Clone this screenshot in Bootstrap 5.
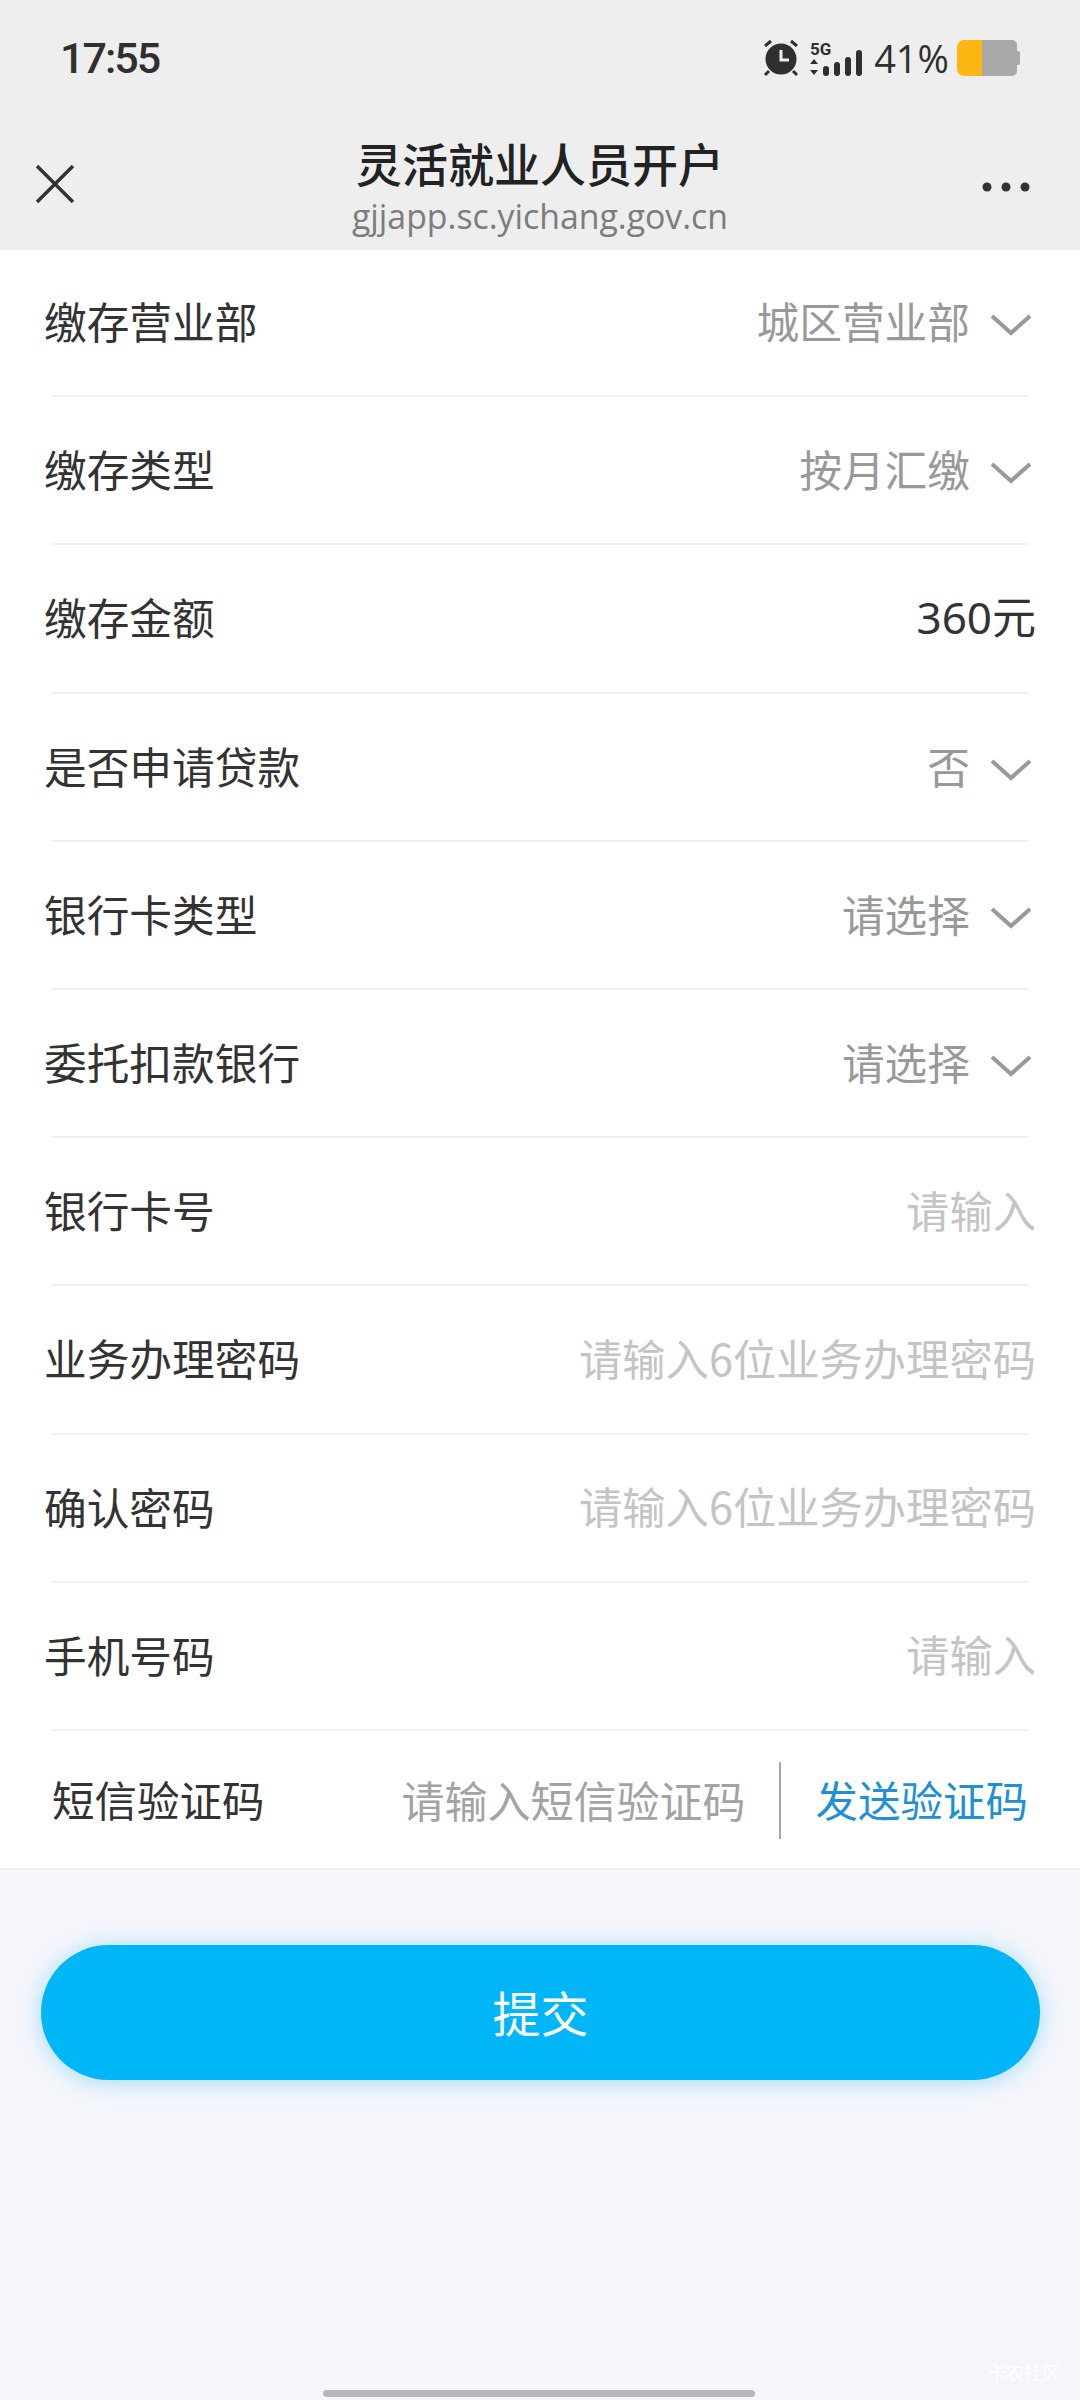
<!DOCTYPE html>
<html lang="zh-CN">
<head>
    <meta charset="UTF-8">
    <title>灵活就业人员开户</title>
    <link href="https://cdn.jsdelivr.net/npm/bootstrap@5.3.0/dist/css/bootstrap.min.css" rel="stylesheet">
    <style>
        body {
            background: #f4f6fb;
            font-family: "Noto Sans CJK SC", "Noto Sans", sans-serif;
            width: 1080px;
            height: 2400px;
            overflow: hidden;
            position: relative;
        }

        .top-area { background: #eeeeee; height: 250px; }

        .status-row { height: 116px; padding: 0 60px 0 60px; color: #2f2f2f; }
        .status-time { font-family: Roboto, sans-serif; font-size: 43px; font-weight: 500; letter-spacing: -2px; }
        .status-pct { font-family: "Open Sans", sans-serif; font-size: 38px; margin: 0 8px 0 10px; line-height: 1; }

        .nav-row { height: 134px; padding: 0 50px 0 35px; }
        .nav-side-l { flex: 0 0 165px; }
        .nav-side-r { flex: 0 0 150px; }
        .nav-title { font-size: 46px; line-height: 60px; color: #222; font-weight: 500; }
        .nav-url { font-family: "Open Sans", sans-serif; font-size: 33.8px; line-height: 38px; margin-top: 5px; color: #7c7c7c; }
        .nav-close { margin-top: 2px; }
        .nav-dots { margin-top: 3px; }

        .form-area { background: #fff; height: 1620px; border-bottom: 2px solid #eeeff2; }

        .form-line { height: 148.2px; padding: 0 44px 8px 44px; font-size: 42.7px; color: #333; position: relative; }
        .form-line::after {
            content: "";
            position: absolute;
            left: 52px;
            right: 52px;
            bottom: 1px;
            height: 2px;
            background: #f0f0f0;
        }
        .val-select { color: #999; }
        .val-input { color: #c4c4c4; font-size: 43.3px; }
        .val-plain { color: #333; font-size: 44px; padding-top: 2px; font-family: "Noto Sans", "Noto Sans CJK SC", sans-serif; }
        .chev { margin: 10px 4px 0 20px; }

        .code-line { height: 138px; padding: 0 52px 4px; font-size: 42.5px; color: #333; }
        .code-input { color: #a3a3a3; font-size: 43px; margin-right: 34px; }
        .code-sep { width: 2px; height: 77px; background: #a6a6a6; margin: 4px 34px 0 0; }
        .code-send { color: #1f8fd6; }

        .submit-btn {
            display: block;
            width: 999px;
            height: 135px;
            margin: 75px 0 0 41px;
            padding: 0 0 4px;
            background: #00b6f7;
            border: none;
            border-radius: 68px;
            color: #fff;
            font-size: 48px;
            box-shadow: 0 2px 22px rgba(0, 170, 240, 0.35);
        }
        .submit-btn:hover { background: #00b6f7; color: #fff; }

        .home-bar { position: absolute; left: 323px; top: 2390px; width: 432px; height: 7px; background: #b6b7bb; border-radius: 4px; }
        .water-mark { position: absolute; left: 988px; top: 2359px; font-size: 18px; color: #ffffff; }
    </style>
</head>
<body>

<div class="top-area">
    <div class="status-row d-flex align-items-center justify-content-between">
        <span class="status-time">17:55</span>
        <div class="d-flex align-items-center">
            <svg width="38" height="38" viewBox="0 0 38 38" class="me-2">
                <circle cx="19" cy="20" r="15.5" fill="#2f2f2f"/>
                <path d="M19 11v10h8" fill="none" stroke="#eee" stroke-width="3"/>
                <path d="M3 7l6-5M35 7l-6-5M7 32l-4 4M31 32l4 4" stroke="#2f2f2f" stroke-width="3" fill="none"/>
            </svg>
            <svg width="56" height="38" viewBox="0 0 56 38">
                <text x="2" y="16" font-family="Roboto, sans-serif" font-size="17" font-weight="700" fill="#2f2f2f">5G</text>
                <path d="M6 20l4 5H2zM6 36l4-5H2z" fill="#2f2f2f"/>
                <rect x="15" y="27" width="6" height="10" rx="3" fill="#2f2f2f"/>
                <rect x="26" y="23" width="6" height="14" rx="3" fill="#2f2f2f"/>
                <rect x="37" y="18" width="6" height="19" rx="3" fill="#2f2f2f"/>
                <rect x="48" y="11" width="6" height="26" rx="3" fill="#2f2f2f"/>
            </svg>
            <span class="status-pct">41%</span>
            <svg width="63" height="36" viewBox="0 0 63 36">
                <path d="M25 0h30a5 5 0 0 1 5 5v26a5 5 0 0 1-5 5H25z" fill="#a9a9a9"/>
                <path d="M25 0H7a7 7 0 0 0-7 7v22a7 7 0 0 0 7 7h18z" fill="#fdb713"/>
                <path d="M60 11h1a2 2 0 0 1 2 2v10a2 2 0 0 1-2 2h-1z" fill="#a9a9a9"/>
            </svg>
        </div>
    </div>
    <div class="nav-row d-flex align-items-center justify-content-between">
        <div class="nav-side-l">
            <svg class="nav-close" width="40" height="38" viewBox="0 0 40 38">
                <path d="M2 1l36 36M38 1L2 37" stroke="#333" stroke-width="3.5" fill="none"/>
            </svg>
        </div>
        <div class="text-center">
            <div class="nav-title">灵活就业人员开户</div>
            <div class="nav-url">gjjapp.sc.yichang.gov.cn</div>
        </div>
        <div class="nav-side-r text-end">
            <svg class="nav-dots" width="48" height="10" viewBox="0 0 48 10">
                <circle cx="5" cy="5" r="4.5" fill="#333"/>
                <circle cx="24" cy="5" r="4.5" fill="#333"/>
                <circle cx="43" cy="5" r="4.5" fill="#333"/>
            </svg>
        </div>
    </div>
</div>

<div class="form-area">
    <div class="form-line d-flex align-items-center justify-content-between">
        <span>缴存营业部</span>
        <div class="d-flex align-items-center val-select">城区营业部
            <svg class="chev" width="42" height="24" viewBox="0 0 42 24"><path d="M2 3l19 17L40 3" fill="none" stroke="#999" stroke-width="4"/></svg>
        </div>
    </div>
    <div class="form-line d-flex align-items-center justify-content-between">
        <span>缴存类型</span>
        <div class="d-flex align-items-center val-select">按月汇缴
            <svg class="chev" width="42" height="24" viewBox="0 0 42 24"><path d="M2 3l19 17L40 3" fill="none" stroke="#999" stroke-width="4"/></svg>
        </div>
    </div>
    <div class="form-line d-flex align-items-center justify-content-between">
        <span>缴存金额</span>
        <span class="val-plain">360元</span>
    </div>
    <div class="form-line d-flex align-items-center justify-content-between">
        <span>是否申请贷款</span>
        <div class="d-flex align-items-center val-select">否
            <svg class="chev" width="42" height="24" viewBox="0 0 42 24"><path d="M2 3l19 17L40 3" fill="none" stroke="#999" stroke-width="4"/></svg>
        </div>
    </div>
    <div class="form-line d-flex align-items-center justify-content-between">
        <span>银行卡类型</span>
        <div class="d-flex align-items-center val-select">请选择
            <svg class="chev" width="42" height="24" viewBox="0 0 42 24"><path d="M2 3l19 17L40 3" fill="none" stroke="#999" stroke-width="4"/></svg>
        </div>
    </div>
    <div class="form-line d-flex align-items-center justify-content-between">
        <span>委托扣款银行</span>
        <div class="d-flex align-items-center val-select">请选择
            <svg class="chev" width="42" height="24" viewBox="0 0 42 24"><path d="M2 3l19 17L40 3" fill="none" stroke="#999" stroke-width="4"/></svg>
        </div>
    </div>
    <div class="form-line d-flex align-items-center justify-content-between">
        <span>银行卡号</span>
        <span class="val-input">请输入</span>
    </div>
    <div class="form-line d-flex align-items-center justify-content-between">
        <span>业务办理密码</span>
        <span class="val-input">请输入6位业务办理密码</span>
    </div>
    <div class="form-line d-flex align-items-center justify-content-between">
        <span>确认密码</span>
        <span class="val-input">请输入6位业务办理密码</span>
    </div>
    <div class="form-line d-flex align-items-center justify-content-between">
        <span>手机号码</span>
        <span class="val-input">请输入</span>
    </div>
    <div class="code-line d-flex align-items-center">
        <span class="me-auto">短信验证码</span>
        <span class="code-input">请输入短信验证码</span>
        <span class="code-sep"></span>
        <span class="code-send">发送验证码</span>
    </div>
</div>

<button type="button" class="btn submit-btn">提交</button>

<div class="water-mark">卡农社区</div>
<div class="home-bar"></div>

</body>
</html>
